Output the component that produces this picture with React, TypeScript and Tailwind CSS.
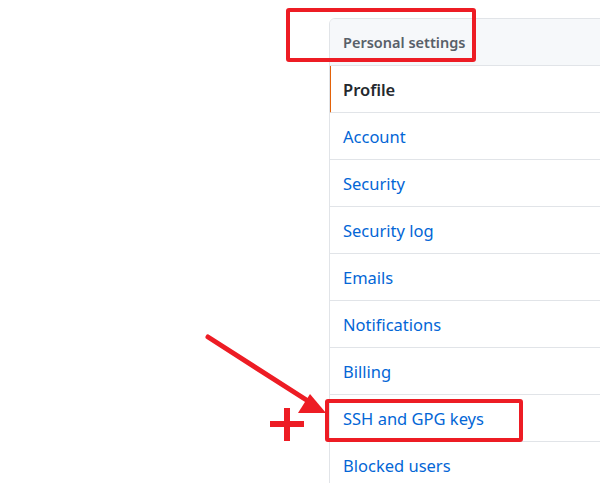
import React from "react";

const items = [
  "Account",
  "Security",
  "Security log",
  "Emails",
  "Notifications",
  "Billing",
  "SSH and GPG keys",
  "Blocked users",
];

export default function App() {
  return (
    <div
      className="relative w-[600px] h-[483px] overflow-hidden bg-white"
      style={{ fontFamily: '"Noto Sans", "Open Sans", sans-serif' }}
    >
      <div className="pt-[18px] pl-[329px]">
        <nav className="w-[320px] border border-[#e1e4e8] rounded-tl-[6px] overflow-hidden">
          <div className="h-[47px] bg-[#f6f8fa] border-b border-[#e1e4e8] flex items-center pl-[13px] pt-[2px] text-[14.5px] font-semibold text-[#586069]">
            Personal settings
          </div>
          <div className="h-[47px] border-b border-[#e1e4e8] border-l-2 border-l-[#e36209] -ml-px flex items-center pl-[12px] pt-[2px] text-[16.5px] font-semibold text-[#24292e]">
            Profile
          </div>
          {items.map((t) => (
            <div
              key={t}
              className="h-[47px] border-b border-[#e1e4e8] flex items-center pl-[13px] pt-[2px] text-[16.5px] text-[#0366d6]"
            >
              {t}
            </div>
          ))}
        </nav>
      </div>

      <svg
        className="absolute inset-0 pointer-events-none"
        width="600"
        height="483"
        viewBox="0 0 600 483"
      >
        <rect x="288" y="10" width="186" height="50" rx="1" fill="none" stroke="#ed1c24" strokeWidth="4" />
        <rect x="327" y="401" width="194" height="39" rx="1" fill="none" stroke="#ed1c24" strokeWidth="4" />
        <line x1="208" y1="337" x2="308" y2="401" stroke="#ed1c24" strokeWidth="5" strokeLinecap="round" />
        <polygon points="326,413 310,394 298,413" fill="#ed1c24" />
        <rect x="270" y="421" width="34" height="6" fill="#ed1c24" />
        <rect x="284" y="408" width="6" height="33" fill="#ed1c24" />
      </svg>
    </div>
  );
}
